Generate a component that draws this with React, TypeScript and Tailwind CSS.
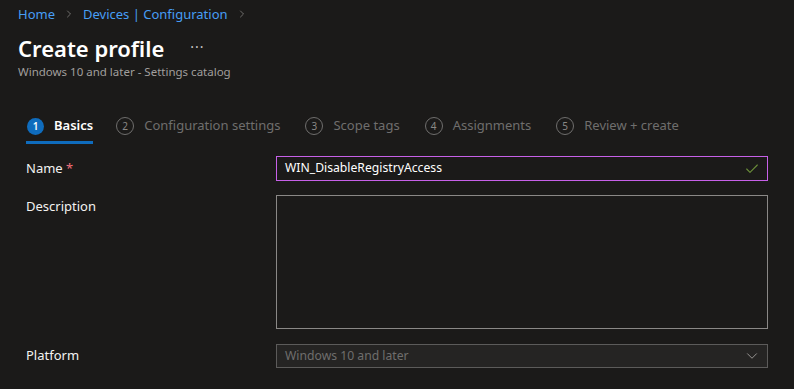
import { Check, ChevronDown, ChevronRight } from "lucide-react";

const steps = [
  { n: 1, label: "Basics", active: true },
  { n: 2, label: "Configuration settings" },
  { n: 3, label: "Scope tags" },
  { n: 4, label: "Assignments" },
  { n: 5, label: "Review + create" },
];

const font = { fontFamily: '"Segoe UI", "Noto Sans", sans-serif' };

const App = () => {
  return (
    <div className="w-[794px] h-[389px] overflow-hidden bg-[#1b1a19] text-[#f3f2f1]" style={font}>
      {/* header */}
      <div className="pl-[18px] pt-[4px]">
        <nav className="flex items-center text-[13px] leading-[20px] text-[#479ef5]">
          <span>Home</span>
          <ChevronRight className="w-[12px] h-[12px] mx-[8px] text-[#8a8886]" strokeWidth={1.5} />
          <span>Devices | Configuration</span>
          <ChevronRight className="w-[12px] h-[12px] mx-[8px] text-[#8a8886]" strokeWidth={1.5} />
        </nav>
        <div className="flex items-center mt-[10px]">
          <h1 className="text-[22px] leading-[28px] font-semibold text-white">Create profile</h1>
          <span className="ml-[26px] text-[14px] text-[#c8c6c4] tracking-[1px] -mt-[4px]">···</span>
        </div>
        <p className="text-[11.5px] leading-[16px] text-[#a19f9d] mt-[2px]">Windows 10 and later - Settings catalog</p>
      </div>

      {/* steps */}
      <div className="pl-[27px] mt-[31px] flex items-center gap-[25px]">
        {steps.map((s) => (
          <div
            key={s.n}
            className={`flex items-center gap-[10px] h-[33px] border-b-[3px] ${
              s.active ? "border-[#0f6cbd] -ml-[1px] pl-[1px] -mr-[2px]" : "border-transparent"
            }`}
          >
            {s.active ? (
              <span className="w-[17px] h-[17px] rounded-full bg-[#0f6cbd] text-white text-[10px] font-semibold flex items-center justify-center">
                {s.n}
              </span>
            ) : (
              <span className="w-[18px] h-[18px] rounded-full border border-[#6f6e6d] text-[#8a8886] text-[10px] flex items-center justify-center">
                {s.n}
              </span>
            )}
            <span
              className={`text-[13px] ${s.active ? "font-semibold text-white" : "text-[#6f6e6d]"}`}
            >
              {s.label}
            </span>
          </div>
        ))}
      </div>

      {/* form */}
      <div className="pl-[26px] pr-[26px] mt-[12px] flex flex-col">
        <div className="flex items-center">
          <label className="w-[250px] text-[13px]">
            Name <span className="text-[#f1707b]">*</span>
          </label>
          <div className="w-[492px] h-[25px] border border-[#c660e8] flex items-center pl-[8px] pr-[7px]">
            <span className="flex-1 text-[12.2px] text-white">WIN_DisableRegistryAccess</span>
            <Check className="w-[16px] h-[16px] text-[#6b8f3a]" strokeWidth={1.6} />
          </div>
        </div>

        <div className="flex mt-[14px]">
          <label className="w-[250px] text-[13px] pt-[2px]">Description</label>
          <div className="w-[492px] h-[134px] border border-[#8a8886]" />
        </div>

        <div className="flex items-center mt-[15px]">
          <label className="w-[250px] text-[13px]">Platform</label>
          <div className="w-[492px] h-[24px] border border-[#5c5b5a] bg-[#252423] flex items-center pl-[8px] pr-[6px]">
            <span className="flex-1 text-[12.2px] text-[#6f6e6d]">Windows 10 and later</span>
            <ChevronDown className="w-[18px] h-[18px] text-[#a19f9d]" strokeWidth={1.2} />
          </div>
        </div>
      </div>
    </div>
  );
};

export default App;
